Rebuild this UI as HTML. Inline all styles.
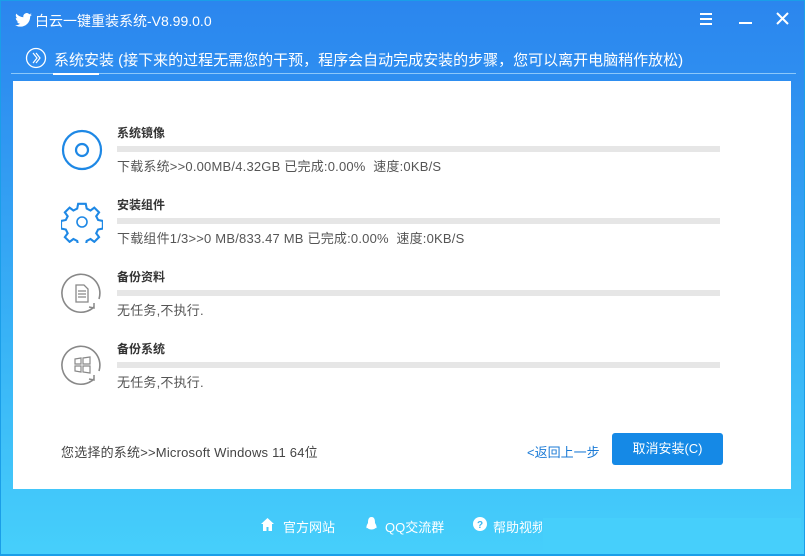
<!DOCTYPE html>
<html><head><meta charset="utf-8"><style>
*{margin:0;padding:0;box-sizing:border-box}
body{width:805px;height:556px;overflow:hidden;font-family:"Liberation Sans","Noto Sans CJK SC",sans-serif;position:relative;background:#1a9ee8}
.win{position:absolute;left:1px;top:1px;right:1px;bottom:2px;background:linear-gradient(#2b86ee 0%,#2e8ef0 14%,#38b2f6 60%,#46cffb 100%)}
.title{position:absolute;left:34px;top:10px;color:#fff;font-size:14px}
.tab{position:absolute;left:53px;top:48px;color:#fff;font-size:15px}
.line{position:absolute;left:10px;right:8px;top:72px;height:1px;background:#8cc8fa}
.tabline{position:absolute;left:52px;top:72px;width:46px;height:2px;background:#fff}
.panel{position:absolute;left:13px;top:81px;width:778px;height:408px;background:#fff}
.row{position:absolute;left:0;width:778px}
.row .h{position:absolute;left:104px;top:-3px;font-size:12px;font-weight:bold;color:#333}
.row .bar{position:absolute;left:104px;top:19px;width:603px;height:6px;background:#e6e6e6}
.row .s{position:absolute;left:104px;top:29px;font-size:13px;color:#555;letter-spacing:.2px}
.ico{position:absolute;left:48px;top:2px}
.foot{position:absolute;left:48px;top:361px;font-size:13px;color:#444;letter-spacing:.2px}
.back{position:absolute;left:514px;top:361px;font-size:13px;color:#1a7ad6}
.btn{position:absolute;left:599px;top:352px;width:111px;height:32px;background:#1589e6;border-radius:3px;color:#fff;font-size:13px;text-align:center;line-height:32px}
.bot{position:absolute;top:517px;color:#fff;font-size:13px}
.ctl{position:absolute;color:#fff}
</style></head><body>
<div class="win">
<svg style="position:absolute;left:14px;top:12px" width="17" height="14" viewBox="0 0 24 20"><path fill="#fff" d="M24 2.4a10 10 0 0 1-2.8.8A5 5 0 0 0 23.3.5a10 10 0 0 1-3.1 1.2A4.9 4.9 0 0 0 11.8 6 14 14 0 0 1 1.7.9a4.9 4.9 0 0 0 1.5 6.6 5 5 0 0 1-2.2-.6 4.9 4.9 0 0 0 3.9 4.9 5 5 0 0 1-2.2.1 4.9 4.9 0 0 0 4.6 3.4A9.9 9.9 0 0 1 0 17.3 14 14 0 0 0 7.5 19.5c9 0 14-7.5 14-14v-.6A10 10 0 0 0 24 2.4z"/></svg>
<div class="title">白云一键重装系统-V8.99.0.0</div>
<div class="ctl" style="left:699px;top:12px;width:12px;height:12px;border-top:2px solid #fff;border-bottom:2px solid #fff"><div style="margin-top:3px;height:2px;background:#fff"></div></div>
<div class="ctl" style="left:738px;top:21px;width:13px;height:2px;background:#fff"></div>
<svg class="ctl" style="left:775px;top:11px" width="13" height="13"><path d="M1 1L12 12M12 1L1 12" stroke="#fff" stroke-width="2"/></svg>
<svg style="position:absolute;left:24px;top:46px" width="22" height="22"><circle cx="11" cy="11" r="9.5" fill="none" stroke="#fff" stroke-width="1.3"/><path d="M8 6l4 5-4 5M11 6l4 5-4 5" fill="none" stroke="#fff" stroke-width="1.2"/></svg>
<div class="tab">系统安装 (接下来的过程无需您的干预，程序会自动完成安装的步骤，您可以离开电脑稍作放松)</div>
<div class="line"></div><div class="tabline"></div>
</div>
<div class="panel">
<div class="row" style="top:46px">
<svg class="ico" width="42" height="42"><circle cx="21" cy="21" r="19" fill="none" stroke="#1e88e5" stroke-width="2.2"/><circle cx="21" cy="21" r="6" fill="none" stroke="#1e88e5" stroke-width="2.2"/></svg>
<div class="h">系统镜像</div><div class="bar"></div><div class="s">下载系统&gt;&gt;0.00MB/4.32GB 已完成:0.00%&nbsp; 速度:0KB/S</div></div>
<div class="row" style="top:118px">
<svg class="ico" width="42" height="42" viewBox="0 0 42 42"><path fill="none" stroke="#1e88e5" stroke-width="2.2" d="M17 3h8l1 5 4 2 4-3 5 5-3 4 2 4 5 1v8l-5 1-2 4 3 4-5 5-4-3-4 2-1 5h-8l-1-5-4-2-4 3-5-5 3-4-2-4-5-1v-8l5-1 2-4-3-4 5-5 4 3 4-2z" transform="translate(1 0) scale(.95)"/><circle cx="21" cy="21" r="5" fill="none" stroke="#1e88e5" stroke-width="1.6"/></svg>
<div class="h">安装组件</div><div class="bar"></div><div class="s">下载组件1/3&gt;&gt;0 MB/833.47 MB 已完成:0.00%&nbsp; 速度:0KB/S</div></div>
<div class="row" style="top:190px">
<svg class="ico" width="42" height="42"><path d="M33 34A19 19 0 1 1 38 26" fill="none" stroke="#888" stroke-width="1.6"/><path d="M28 34l5 1 0-5" fill="none" stroke="#888" stroke-width="1.5"/><path d="M15 12h8l4 4v13h-12z M17 18h8M17 21h8M17 24h8" fill="none" stroke="#888" stroke-width="1.3"/></svg>
<div class="h">备份资料</div><div class="bar"></div><div class="s">无任务,不执行.</div></div>
<div class="row" style="top:262px">
<svg class="ico" width="42" height="42"><path d="M33 34A19 19 0 1 1 38 26" fill="none" stroke="#888" stroke-width="1.6"/><path d="M28 34l5 1 0-5" fill="none" stroke="#888" stroke-width="1.5"/><path d="M14 14l6-1v6h-6zM22 13l7-1v7h-7zM14 21h6v6l-6-1zM22 21h7v7l-7-1z" fill="none" stroke="#888" stroke-width="1.2"/></svg>
<div class="h">备份系统</div><div class="bar"></div><div class="s">无任务,不执行.</div></div>
<div class="foot">您选择的系统&gt;&gt;Microsoft Windows 11 64位</div>
<div class="back">&lt;返回上一步</div>
<div class="btn">取消安装(C)</div>
</div>
<svg style="position:absolute;left:261px;top:518px" width="13" height="13"><path d="M6.5 0L0 6h2v7h3.5v-4h2v4H11V6h2z" fill="#fff"/></svg>
<div class="bot" style="left:283px">官方网站</div>
<svg style="position:absolute;left:365px;top:517px" width="13" height="14"><path d="M6.5 0C3 0 3 4 3 6 1 9 1 12 2.5 11 4 13 9 13 10.5 11 12 12 12 9 10 6 10 4 10 0 6.5 0z" fill="#fff"/></svg>
<div class="bot" style="left:385px">QQ交流群</div>
<svg style="position:absolute;left:473px;top:517px" width="14" height="14"><circle cx="7" cy="7" r="7" fill="#fff"/><text x="7" y="11" font-size="10" font-weight="bold" text-anchor="middle" fill="#3ab6f0" font-family="Liberation Sans">?</text></svg>
<div class="bot" style="left:493px;width:49px;overflow:hidden;white-space:nowrap">帮助视频</div>
<div style="position:absolute;left:543px;top:518px;width:258px;height:36px;background:#46cffb"></div>
</body></html>
